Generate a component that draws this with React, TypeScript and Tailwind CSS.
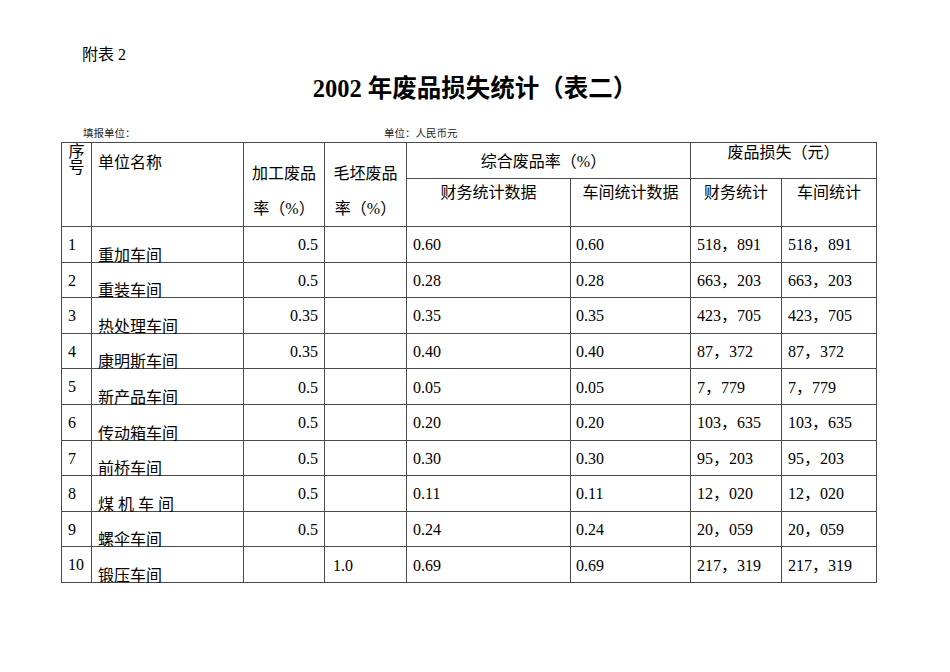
const rows = [
  { no: "1", name: "重加车间", a: "0.5", b: "", c: "0.60", d: "0.60", e: "518，891", f: "518，891" },
  { no: "2", name: "重装车间", a: "0.5", b: "", c: "0.28", d: "0.28", e: "663，203", f: "663，203" },
  { no: "3", name: "热处理车间", a: "0.35", b: "", c: "0.35", d: "0.35", e: "423，705", f: "423，705" },
  { no: "4", name: "康明斯车间", a: "0.35", b: "", c: "0.40", d: "0.40", e: "87，372", f: "87，372" },
  { no: "5", name: "新产品车间", a: "0.5", b: "", c: "0.05", d: "0.05", e: "7，779", f: "7，779" },
  { no: "6", name: "传动箱车间", a: "0.5", b: "", c: "0.20", d: "0.20", e: "103，635", f: "103，635" },
  { no: "7", name: "前桥车间", a: "0.5", b: "", c: "0.30", d: "0.30", e: "95，203", f: "95，203" },
  { no: "8", name: "煤 机 车 间", a: "0.5", b: "", c: "0.11", d: "0.11", e: "12，020", f: "12，020" },
  { no: "9", name: "螺伞车间", a: "0.5", b: "", c: "0.24", d: "0.24", e: "20，059", f: "20，059" },
  { no: "10", name: "锻压车间", a: "", b: "1.0", c: "0.69", d: "0.69", e: "217，319", f: "217，319" },
];

const cell = "border border-[#4a4a4a] p-0";

const App = () => {
  return (
    <div
      className="w-[950px] h-[672px] bg-white text-black"
      style={{ fontFamily: '"Liberation Serif", "Noto Sans CJK SC", serif' }}
    >
      <div className="pt-[46px] pl-[82px] text-[16px] leading-[18px]">附表 2</div>
      <div className="mt-[11px] text-center text-[24.5px] leading-[28px] font-bold">
        <span className="mr-[2px]">2002</span>
        <span className="ml-[4px]">年废品损失统计（表二）</span>
      </div>
      <div className="mt-[24px] flex text-[10.5px] leading-[14px] text-[#222]">
        <span className="pl-[83px] w-[384px]">填报单位：</span>
        <span>单位：人民币元</span>
      </div>
      <div className="pl-[61px] pt-[1px]">
        <table className="table-fixed border-collapse w-[815px] text-[16px]">
          <colgroup>
            <col className="w-[30px]" />
            <col className="w-[152px]" />
            <col className="w-[81px]" />
            <col className="w-[82px]" />
            <col className="w-[164px]" />
            <col className="w-[120px]" />
            <col className="w-[91px]" />
            <col className="w-[95px]" />
          </colgroup>
          <thead>
            <tr className="h-[36px]">
              <th rowSpan={2} className={`${cell} align-top text-center font-normal leading-[16px] pt-[1px]`}>
                序<br />号
              </th>
              <th rowSpan={2} className={`${cell} align-top text-left font-normal pl-[6px] pt-[10px] leading-[20px]`}>
                单位名称
              </th>
              <th rowSpan={2} className={`${cell} align-top text-center font-normal pt-[13px] leading-[35px]`}>
                加工废品<br />率（%）
              </th>
              <th rowSpan={2} className={`${cell} align-top text-center font-normal pt-[13px] leading-[35px]`}>
                毛坯废品<br />率（%）
              </th>
              <th colSpan={2} className={`${cell} align-middle text-center font-normal leading-[20px] pt-[3px] pr-[10px]`}>
                综合废品率（%）
              </th>
              <th colSpan={2} className={`${cell} align-top text-center font-normal leading-[20px]`}>
                废品损失（元）
              </th>
            </tr>
            <tr className="h-[48px]">
              <th className={`${cell} align-top text-center font-normal leading-[20px] pt-[4px]`}>财务统计数据</th>
              <th className={`${cell} align-top text-center font-normal leading-[20px] pt-[4px]`}>车间统计数据</th>
              <th className={`${cell} align-top text-center font-normal leading-[20px] pt-[4px]`}>财务统计</th>
              <th className={`${cell} align-top text-center font-normal leading-[20px] pt-[4px]`}>车间统计</th>
            </tr>
          </thead>
          <tbody>
            {rows.map((r) => (
              <tr key={r.no} className="h-[35.6px]">
                <td className={`${cell} align-top pl-[6px] pt-[9px] leading-[18px]`}>{r.no}</td>
                <td className={`${cell} align-bottom pl-[6px] leading-[12px] whitespace-pre`}>{r.name}</td>
                <td className={`${cell} align-middle text-right pr-[6px] leading-[18px] pt-[2px]`}>{r.a}</td>
                <td className={`${cell} align-middle pl-[8px] leading-[18px] pt-[2px]`}>{r.b}</td>
                <td className={`${cell} align-middle pl-[6px] leading-[18px] pt-[2px]`}>{r.c}</td>
                <td className={`${cell} align-middle pl-[5px] leading-[18px] pt-[2px]`}>{r.d}</td>
                <td className={`${cell} align-middle pl-[6px] leading-[18px] pt-[2px]`}>{r.e}</td>
                <td className={`${cell} align-middle pl-[6px] leading-[18px] pt-[2px]`}>{r.f}</td>
              </tr>
            ))}
          </tbody>
        </table>
      </div>
    </div>
  );
};

export default App;
